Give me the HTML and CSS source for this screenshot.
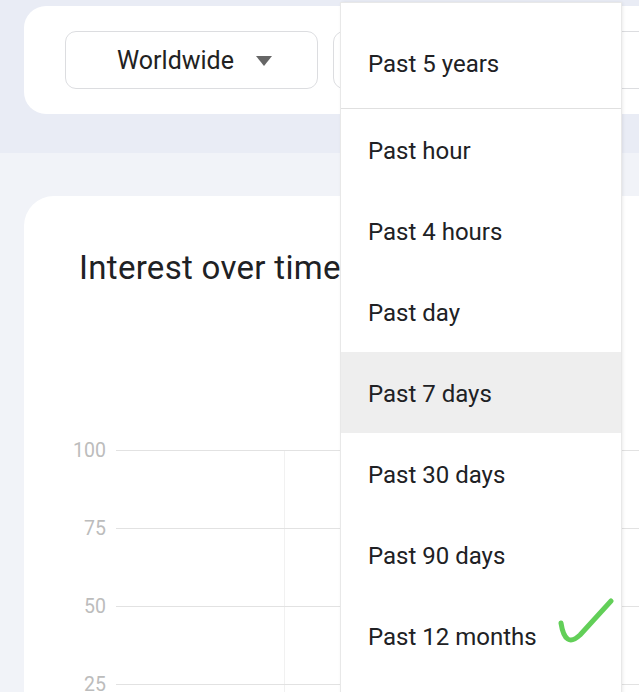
FILE: index.html
```html
<!DOCTYPE html>
<html lang="en">
<head>
    <meta charset="UTF-8">
    <meta name="viewport" content="width=device-width, initial-scale=1.0">
    <title>Explore - Interest over time</title>
    <link rel="stylesheet" href="styles.css">
</head>
<body>

<header class="filters">
    <div class="filter-card">
        <button class="picker">
            <span>Worldwide</span>
            <span class="caret"></span>
        </button>
        <!-- selector de tiempo, tapado por el menu abierto -->
        <button class="picker picker-wide"></button>
    </div>
</header>

<main class="content">
    <section class="card">
        <h2 class="card-title">Interest over time</h2>
        <svg class="chart" width="640" height="300" viewBox="0 0 640 300">
            <line class="grid-v" x1="260.5" y1="20" x2="260.5" y2="300"/>
            <line class="grid-h" x1="92" y1="20.5" x2="640" y2="20.5"/>
            <line class="grid-h" x1="92" y1="98.5" x2="640" y2="98.5"/>
            <line class="grid-h" x1="92" y1="176.5" x2="640" y2="176.5"/>
            <line class="grid-h" x1="92" y1="254.5" x2="640" y2="254.5"/>
            <text class="axis" x="82" y="27">100</text>
            <text class="axis" x="82" y="105">75</text>
            <text class="axis" x="82" y="183">50</text>
            <text class="axis" x="82" y="261">25</text>
        </svg>
    </section>
</main>

<!-- menu abierto del selector de tiempo -->
<ul class="menu">
    <li class="menu-item menu-first">Past 5 years</li>
    <li class="menu-item">Past hour</li>
    <li class="menu-item">Past 4 hours</li>
    <li class="menu-item">Past day</li>
    <li class="menu-item active">Past 7 days</li>
    <li class="menu-item">Past 30 days</li>
    <li class="menu-item">Past 90 days</li>
    <li class="menu-item selected">
        <span>Past 12 months</span>
        <svg class="check" width="60" height="78" viewBox="0 3 60 78">
            <path d="M5 28 Q9 54 24 40 L55 6" fill="none" stroke="#62cf58" stroke-width="5" stroke-linecap="round" stroke-linejoin="round"/>
        </svg>
    </li>
</ul>

</body>
</html>
```

FILE: styles.css
```css
body {
    font-family: Roboto, "Noto Sans", sans-serif;
    margin: 0;
    padding: 0;
    width: 639px;
    height: 692px;
    overflow: hidden;
    background-color: #f1f3f8;
    color: #202124;
}
.filters {
    height: 153px;
    box-sizing: border-box;
    padding: 6px 0 0 24px;
    background-color: #e9ecf5;
}
.filter-card {
    height: 108px;
    box-sizing: border-box;
    padding: 25px 0 0 41px;
    background-color: white;
    border-radius: 22px 0 0 22px;
    display: flex;
    gap: 15px;
    overflow: hidden;
}
.picker {
    flex: none;
    width: 253px;
    height: 58px;
    box-sizing: border-box;
    border: 1px solid #dcdde0;
    border-radius: 11px;
    background: white;
    display: flex;
    align-items: center;
    justify-content: center;
    gap: 22px;
    font-family: Roboto, sans-serif;
    font-size: 25px;
    color: #222;
    padding: 0 0 0 6px;
}
.picker-wide {
    width: 400px;
}
.caret {
    width: 0;
    height: 0;
    border-left: 8px solid transparent;
    border-right: 8px solid transparent;
    border-top: 10px solid #666;
    margin-top: 2px;
}
.content {
    padding: 43px 0 0 24px;
}
.card {
    background-color: white;
    border-radius: 30px 0 0 0;
    height: 500px;
    padding: 53px 0 0 0;
    box-sizing: border-box;
}
.card-title {
    margin: 0 0 0 55px;
    font-size: 33px;
    font-weight: 400;
    letter-spacing: 0.3px;
    line-height: 38px;
    color: #202124;
}
.chart {
    display: block;
    margin-top: 143px;
}
.grid-h {
    stroke: #e2e2e2;
    stroke-width: 1;
}
.grid-v {
    stroke: #f1f1f1;
    stroke-width: 1;
}
.axis {
    font-family: Roboto, sans-serif;
    font-size: 19.5px;
    fill: #bcbcbc;
    text-anchor: end;
}
.menu {
    position: absolute;
    left: 341px;
    top: 3px;
    width: 280px;
    margin: 0;
    padding: 0 0 40px 0;
    list-style: none;
    background: white;
    box-shadow: 0 0 0 1px #e8e8e8, 1px 0 4px rgba(0, 0, 0, 0.12);
}
.menu-item {
    height: 81px;
    box-sizing: border-box;
    line-height: 78px;
    padding: 3px 0 0 27px;
    font-size: 24px;
    color: #202124;
    display: flex;
    justify-content: space-between;
    align-items: center;
}
.menu-first {
    height: 106px;
    padding-top: 22px;
    padding-bottom: 5px;
    border-bottom: 1px solid #e0e0e0;
}
.active {
    background-color: #eeeeee;
}
.check {
    margin-right: 5px;
}
```
